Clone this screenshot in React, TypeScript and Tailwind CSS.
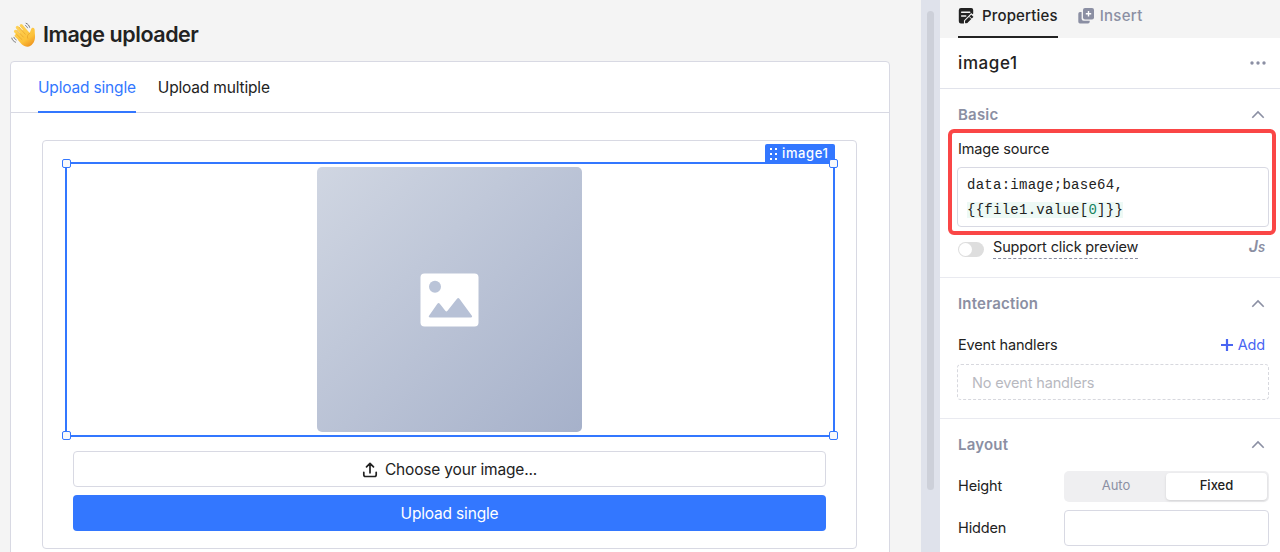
import type { ReactNode } from "react";

function WaveIcon() {
  return (
    <svg className="ml-px h-[26px] w-[26px] shrink-0" viewBox="0 0 26 26" fill="none">
      <defs>
        <linearGradient id="hand" x1="5" y1="3" x2="19" y2="24" gradientUnits="userSpaceOnUse">
          <stop stopColor="#ffd45a" />
          <stop offset="0.7" stopColor="#fcc23a" />
          <stop offset="1" stopColor="#ef9722" />
        </linearGradient>
      </defs>
      <g stroke="url(#hand)" strokeWidth="3.1" strokeLinecap="round">
        <path d="M10.2 3.6l7 8.2M6.3 5.4l8.5 9.4M4.5 9.3l8.3 8.4M5.1 13.7l6.6 6.2" />
      </g>
      <path d="M10 9l4-2 4.7 4.1 1.5-4c.5-1.6 2.7-1.8 3.3-.2.4 1.2.2 3 .4 5.1.7 5.7-1.1 9.7-4.4 11.8-2.8 1.7-6.3.6-8.8-1.6L7 18z" fill="url(#hand)" />
      <g stroke="#e5a02b" strokeWidth="0.7" strokeLinecap="round">
        <path d="M8.2 5.3l6 6.9M5.9 8.2l6.5 6.9M5.5 12.2l5.4 5.3M18.7 11.2c-2.1 1.4-2.8 3.1-2 5.1" />
      </g>
      <g stroke="#77787b" strokeWidth="1" strokeLinecap="round">
        <path d="M15.1 1.3c1.9.7 3 2 3.5 4M14.6 3.6c1 .6 1.5 1.3 1.9 2.2M.8 16.1c.5 2 1.7 3.3 3.7 4.1M2.9 15.3c.5 1.2 1.2 2 2.3 2.6" />
      </g>
    </svg>
  );
}

function PropertiesIcon() {
  return (
    <svg className="h-4 w-4 shrink-0" viewBox="0 0 16 16">
      <path d="M3 0h10.200a2 2 0 0 1 2 2v3.500L7.200 13v2.500H3A2.200 2.200 0 0 1 .8 13.300V2.200A2.200 2.200 0 0 1 3 0z" fill="#222" />
      <path d="M3.700 4.200h8M3.700 8h4" stroke="#f4f4f4" strokeWidth="1.600" strokeLinecap="round" />
      <path d="M13.300 5.900l2.900 2.900-6.700 6.900H6.500v-3z" fill="#222" stroke="#f4f4f4" strokeWidth="1.100" />
      <path d="M11 8.300l2.700 2.700" stroke="#f4f4f4" strokeWidth="1" />
    </svg>
  );
}

function InsertIcon() {
  return (
    <svg className="h-4 w-4 shrink-0" viewBox="0 0 16 16">
      <rect x="5" y="0" width="11" height="11.5" rx="2" fill="#8b8fa3" />
      <path d="M10.5 3v5.4M7.8 5.7h5.4" stroke="#fff" strokeWidth="1.4" />
      <path d="M3.6 4H2a1.700 1.700 0 0 0-1.700 1.700v8A1.700 1.700 0 0 0 2 15.400h8a1.700 1.700 0 0 0 1.700-1.700v-.9H5.600a2 2 0 0 1-2-2z" fill="#8b8fa3" />
    </svg>
  );
}

function UploadIcon() {
  return (
    <svg className="h-4 w-4 shrink-0" viewBox="0 0 16 16" fill="none" stroke="#222" strokeWidth="1.7" strokeLinecap="round" strokeLinejoin="round">
      <path d="M8 10.8V1.500M4.500 4.800L8 1.300l3.500 3.500M1.800 10.300v2.500c0 1.100.6 1.700 1.700 1.700h9c1.100 0 1.700-.6 1.700-1.700v-2.500" />
    </svg>
  );
}

function ImageGlyph() {
  return (
    <svg className="h-[54px] w-[59px]" viewBox="0 0 59 54">
      <rect x=".5" y=".5" width="58" height="53" rx="4" fill="#fff" />
      <circle cx="15" cy="13.7" r="6" fill="#bac4d8" />
      <path d="M9.200 42.500l8.200-11.700c.8-1.100 1.600-1.100 2.400 0l5.500 7c.8.900 1.500.9 2.200 0l9.500-12.100c.9-1 1.600-1 2.400 0L51.700 42.500c.8 1.200.4 2-.9 2H10.200c-1.400 0-1.900-.8-1-2z" fill="#b7c1d6" />
    </svg>
  );
}

function Section({ title, children, className }: { title: string; children: ReactNode; className: string }) {
  return (
    <section className={className}>
      <div className="flex h-[52px] items-center justify-between pr-[15px]">
        <h2 className="text-[15px] font-semibold tracking-[0.2px] text-[#8b8fa3]">{title}</h2>
        <svg className="h-3 w-3.5" viewBox="0 0 14 12" fill="none" stroke="#8b8fa3" strokeWidth="1.6">
          <path d="M1.3 8.8L7 3l5.7 5.800" />
        </svg>
      </div>
      {children}
    </section>
  );
}

function SelectedImage() {
  return (
    <div className="relative ml-[22px] mt-[21px] flex h-[275px] w-[770px] items-center justify-center border-2 border-[#3377ff]">
      <div className="mr-px flex h-[265px] w-[265px] items-center justify-center rounded-[5px] bg-linear-to-br from-[#d0d6e2] to-[#a6b1ca]">
        <ImageGlyph />
      </div>
      <div className="absolute -top-[20px] right-[-2px] flex h-[19px] w-[70px] items-center rounded-t-[2px] bg-[#3377ff] pl-[5px] text-[13px] font-medium leading-none tracking-[0.6px] text-white">
        <svg className="mr-[5px] h-3 w-[7px] shrink-0" viewBox="0 0 7 12" fill="#fff">
          <path d="M0 0h2v2H0zM5 0h2v2H5zM0 5h2v2H0zM5 5h2v2H5zM0 10h2v2H0zM5 10h2v2H5z" />
        </svg>
        image1
      </div>
      <i className="absolute -left-[5px] -top-[5px] h-[9px] w-[9px] rounded-[2px] border border-[#3377ff] bg-[#f8f9fb]" />
      <i className="absolute -right-[5px] -top-[5px] h-[9px] w-[9px] rounded-[2px] border border-[#3377ff] bg-[#f8f9fb]" />
      <i className="absolute -bottom-[5px] -left-[5px] h-[9px] w-[9px] rounded-[2px] border border-[#3377ff] bg-[#f8f9fb]" />
      <i className="absolute -bottom-[5px] -right-[5px] h-[9px] w-[9px] rounded-[2px] border border-[#3377ff] bg-[#f8f9fb]" />
    </div>
  );
}

export default function App() {
  return (
    <div className="flex h-[552px] w-[1280px] overflow-hidden bg-[#f4f4f4] font-[Inter,sans-serif] text-[#222]">
      <main className="w-[921px] shrink-0 overflow-hidden pl-[10px]">
        <header className="flex h-[61px] items-center gap-[6px] pt-[8px]">
          <WaveIcon />
          <h1 className="text-[21.5px] font-semibold tracking-[-0.45px]">Image uploader</h1>
        </header>
        <div className="h-[520px] w-[880px] rounded-t-[4px] border border-[#d8d9e3] bg-white">
          <nav className="flex h-[51px] gap-[22px] border-b border-[#d8d9e3] pl-[27px] text-[15.5px] tracking-[-0.18px]">
            <span className="flex h-[51px] items-center border-b-2 border-[#3377ff] pt-[3px] text-[#3377ff]">Upload single</span>
            <span className="flex h-[51px] items-center pt-px">Upload multiple</span>
          </nav>
          <div className="ml-[31px] mt-[27px] flex h-[409px] w-[815px] flex-col rounded-[4px] border border-[#d8d9e3]">
            <SelectedImage />
            <button className="ml-[30px] mt-[14px] flex h-[36px] w-[753px] shrink-0 items-center justify-center gap-[7px] rounded-[4px] border border-[#d8d9e3] pt-px text-[15.5px] tracking-[-0.18px]">
              <UploadIcon />Choose your image...
            </button>
            <button className="ml-[30px] mt-2 h-[36px] w-[753px] shrink-0 rounded-[4px] bg-[#3377ff] pt-[2px] text-[15.5px] tracking-[-0.18px] text-white">Upload single</button>
          </div>
        </div>
      </main>
      <div className="flex w-[19px] shrink-0 justify-center bg-[#dfe2eb] pt-[11px]">
        <div className="h-[479px] w-[7px] rounded-full bg-[#cdd0d9]" />
      </div>
      <aside className="w-[340px] shrink-0 overflow-hidden bg-white pl-[18px] text-[14.5px] tracking-[-0.15px]">
        <nav className="-ml-[18px] flex h-[38px] gap-[20px] bg-[#f4f4f4] pl-[18px] text-[15px] font-medium tracking-[0.15px]">
          <span className="flex items-center gap-[8px] border-b-2 border-[#222] pb-[4px]"><PropertiesIcon />Properties</span>
          <span className="flex items-center gap-[6px] pb-[6px] tracking-[0.3px] text-[#8b8fa3]"><InsertIcon />Insert</span>
        </nav>
        <div className="-ml-[18px] flex h-[51px] items-center justify-between border-b border-[#e1e3eb] pl-[18px] pr-[14px]">
          <span className="pt-[2px] text-[17px] font-medium tracking-[0.6px]">image1</span>
          <svg className="h-1 w-4" viewBox="0 0 16 4" fill="#8b8fa3">
            <circle cx="2" cy="2" r="1.7" /><circle cx="8" cy="2" r="1.7" /><circle cx="14" cy="2" r="1.7" />
          </svg>
        </div>
        <Section title="Basic" className="-ml-[18px] h-[189px] border-b border-[#e9eaf0] pl-[18px]">
          <div className="-ml-[10px] -mt-[12px] h-[106px] w-[328px] rounded-[6px] border-4 border-[#fa4646] pl-[5px] pt-[2px]">
            <div className="h-[28px] pl-px leading-[28px]">Image source</div>
            <div className="mt-[4px] h-[60px] w-[312px] rounded-[4px] border border-[#d8d9e3] pl-[9px] pt-[5px] font-['Liberation_Mono',monospace] text-[14px] leading-[25px] tracking-[0.27px]">
              <div>data:image;base64,</div>
              <div><span className="bg-[#edf9f5]">{"{{file1.value["}<span className="text-[#16825d]">0</span>{"]}}"}</span></div>
            </div>
          </div>
          <div className="-mt-[2px] flex h-[30px] items-center pr-[15px]">
            <div className="mt-[2px] h-[15px] w-[26px] rounded-full bg-[#dedede] p-[1px]"><div className="h-[13px] w-[13px] rounded-full bg-white" /></div>
            <span className="ml-[9px] h-[21px] border-b border-dashed border-[#8b8fa3] leading-[18px]">Support click preview</span>
            <span className="ml-auto pb-1 text-[16px] font-semibold italic text-[#8b8fa3]">J<span className="text-[13px]">s</span></span>
          </div>
        </Section>
        <Section title="Interaction" className="-ml-[18px] h-[141px] border-b border-[#e9eaf0] pl-[18px]">
          <div className="flex h-[30px] items-center justify-between pr-[15px]">
            <span>Event handlers</span>
            <button className="flex items-center gap-[5px] text-[#4965f2]">
              <svg className="h-3 w-3" viewBox="0 0 12 12" stroke="currentColor" strokeWidth="2.2"><path d="M6 0v12M0 6h12" /></svg>
              Add
            </button>
          </div>
          <div className="-ml-px mt-[4px] flex h-[36px] w-[312px] items-center rounded-[4px] border border-dashed border-[#d7d8de] pl-[14px] pt-px text-[#b8b9bf]">No event handlers</div>
        </Section>
        <Section title="Layout" className="">
          <div className="flex h-[30px] items-center">
            <span className="w-[106px]">Height</span>
            <div className="flex h-[31px] w-[205px] rounded-[5px] bg-[#efeff1] p-[2px] text-[13px] tracking-normal">
              <span className="flex w-[100px] items-center justify-center text-[#8b8fa3]">Auto</span>
              <span className="flex w-[101px] items-center justify-center rounded-[4px] bg-white font-medium shadow-sm">Fixed</span>
            </div>
          </div>
          <div className="mt-[9px] flex h-[36px] items-center">
            <span className="w-[106px]">Hidden</span>
            <div className="h-[36px] w-[205px] rounded-[4px] border border-[#d8d9e3]" />
          </div>
        </Section>
      </aside>
    </div>
  );
}
